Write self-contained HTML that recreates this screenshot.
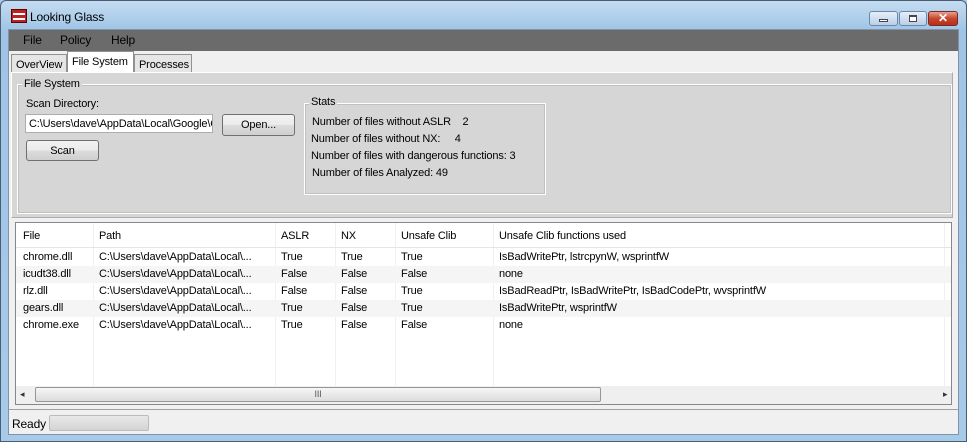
<!DOCTYPE html>
<html><head><style>
*{margin:0;padding:0;box-sizing:border-box}
body{width:967px;height:442px;overflow:hidden;background:#a9cbe8;font-family:"Liberation Sans",sans-serif;font-size:11px;letter-spacing:-0.15px;color:#000;position:relative}
.abs{position:absolute;white-space:nowrap}
#frame{left:0;top:0;width:967px;height:442px;background:linear-gradient(#c4dcf1,#9fc4e6 30px,#a7cae9);border:1px solid #4a5d73;border-radius:6px 6px 0 0}
#client{left:8px;top:29px;width:951px;height:406px;background:#f0f0f0;border:1px solid #7f93ab}
#menu{left:9px;top:30px;width:949px;height:21px;background:#6b6b6b}
#menu span{position:absolute;top:3px;font-size:12px;color:#000}
.tab{position:absolute;height:19px;border:1px solid #919191;background:#e6e6e6;font-size:11px;padding:4px 4px 0;white-space:nowrap}
#panel{left:11px;top:72px;width:942px;height:146px;background:#d6d6d6;border:1px solid #fff;border-right-color:#adadad;border-bottom-color:#adadad}
.grp{position:absolute;border:1px solid #fff;box-shadow:inset 0 0 0 1px #c0c0c0}
.lbl{position:absolute;background:#d6d6d6;padding:0 2px;font-size:11px;white-space:nowrap}
.btn{position:absolute;border:1px solid #707070;border-radius:3px;background:linear-gradient(#f2f2f2,#ebebeb 50%,#dddddd 50%,#cfcfcf);text-align:center;font-size:11px;padding-top:4px}
#list{left:15px;top:222px;width:937px;height:183px;background:#fff;border:1px solid #828790}
.row{position:absolute;left:0;width:935px;height:17px}
.row span,.hdr span{position:absolute;top:2px;white-space:nowrap}
.vl{position:absolute;top:0;width:1px;height:165px;background:#f0f0f0}
</style></head><body>
<div id="frame" class="abs"></div>
<div class="abs" style="left:11px;top:9px;width:16px;height:14px;background:#b22;border:1px solid #600"><div style="margin:3px 1px;height:2px;background:#fff"></div><div style="margin:2px 1px;height:2px;background:#fff"></div></div>
<div class="abs" style="left:30px;top:10px;font-size:12px">Looking Glass</div>
<div class="abs" style="left:869px;top:11px;width:29px;height:15px;border:1px solid #6d87a6;border-radius:3px;background:linear-gradient(#e6eef8,#b9cfe6)"><div style="margin:7px 9px 0;height:3px;background:#fff;border:1px solid #445"></div></div>
<div class="abs" style="left:899px;top:11px;width:28px;height:15px;border:1px solid #6d87a6;border-radius:3px;background:linear-gradient(#e6eef8,#b9cfe6)"><div style="margin:3px 9px 0;height:7px;border:1px solid #445;border-top-width:2px;background:#fff"></div></div>
<div class="abs" style="left:928px;top:11px;width:30px;height:15px;border:1px solid #7a2a20;border-radius:3px;background:linear-gradient(#e8a08f,#c9452f 50%,#b52f18);color:#fff;font-weight:bold;text-align:center;font-size:12px;line-height:13px">✕</div>
<div id="client" class="abs"></div>
<div id="menu" class="abs"><span style="left:14px">File</span><span style="left:51px">Policy</span><span style="left:102px">Help</span></div>
<div class="tab" style="left:11px;top:54px;width:56px">OverView</div>
<div class="tab" style="left:67px;top:51px;width:67px;height:22px;background:#fff;border-bottom:none;padding-top:4px">File System</div>
<div class="tab" style="left:134px;top:54px;width:58px">Processes</div>
<div id="panel" class="abs"></div>
<div class="grp" style="left:17px;top:84px;width:935px;height:130px"></div>
<div class="lbl" style="left:22px;top:78px">File System</div>
<div class="abs" style="left:26px;top:98px">Scan Directory:</div>
<div class="abs" style="left:25px;top:114px;width:188px;height:19px;background:#fff;border:1px solid #abadb3;padding:3px 3px;overflow:hidden;white-space:nowrap">C:\Users\dave\AppData\Local\Google\Chrome</div>
<div class="btn" style="left:222px;top:114px;width:73px;height:22px">Open...</div>
<div class="btn" style="left:26px;top:140px;width:73px;height:21px">Scan</div>
<div class="grp" style="left:304px;top:103px;width:242px;height:92px"></div>
<div class="lbl" style="left:309px;top:96px">Stats</div>
<div class="abs" style="left:312px;top:116px">Number of files without ASLR&nbsp;&nbsp;&nbsp;&nbsp;2</div>
<div class="abs" style="left:311px;top:133px">Number of files without NX:&nbsp;&nbsp;&nbsp;&nbsp;&nbsp;4</div>
<div class="abs" style="left:311px;top:150px">Number of files with dangerous functions: 3</div>
<div class="abs" style="left:312px;top:167px">Number of files Analyzed: 49</div>
<div id="list" class="abs">
<div class="vl" style="left:77px"></div><div class="vl" style="left:259px"></div><div class="vl" style="left:319px"></div><div class="vl" style="left:379px"></div><div class="vl" style="left:477px"></div><div class="vl" style="left:928px"></div>
<div class="row hdr" style="top:5px;height:20px;border-bottom:1px solid #e5e5e5"><span style="left:7px">File</span><span style="left:83px">Path</span><span style="left:265px">ASLR</span><span style="left:325px">NX</span><span style="left:385px">Unsafe Clib</span><span style="left:483px">Unsafe Clib functions used</span></div>
<div class="row" style="top:26px"><span style="left:7px">chrome.dll</span><span style="left:83px">C:\Users\dave\AppData\Local\...</span><span style="left:265px">True</span><span style="left:325px">True</span><span style="left:385px">True</span><span style="left:483px">IsBadWritePtr, lstrcpynW, wsprintfW</span></div>
<div class="row" style="top:43px;background:#f5f5f5"><span style="left:7px">icudt38.dll</span><span style="left:83px">C:\Users\dave\AppData\Local\...</span><span style="left:265px">False</span><span style="left:325px">False</span><span style="left:385px">False</span><span style="left:483px">none</span></div>
<div class="row" style="top:60px"><span style="left:7px">rlz.dll</span><span style="left:83px">C:\Users\dave\AppData\Local\...</span><span style="left:265px">False</span><span style="left:325px">False</span><span style="left:385px">True</span><span style="left:483px">IsBadReadPtr, IsBadWritePtr, IsBadCodePtr, wvsprintfW</span></div>
<div class="row" style="top:77px;background:#f5f5f5"><span style="left:7px">gears.dll</span><span style="left:83px">C:\Users\dave\AppData\Local\...</span><span style="left:265px">True</span><span style="left:325px">False</span><span style="left:385px">True</span><span style="left:483px">IsBadWritePtr, wsprintfW</span></div>
<div class="row" style="top:94px"><span style="left:7px">chrome.exe</span><span style="left:83px">C:\Users\dave\AppData\Local\...</span><span style="left:265px">True</span><span style="left:325px">False</span><span style="left:385px">False</span><span style="left:483px">none</span></div>
<div class="abs" style="left:0;top:163px;width:935px;height:18px;background:#efefef"></div>
<div class="abs" style="left:4px;top:166px;font-size:9px;color:#333">◂</div>
<div class="abs" style="left:927px;top:166px;font-size:9px;color:#333">▸</div>
<div class="abs" style="left:19px;top:164px;width:566px;height:15px;border:1px solid #979797;border-radius:2px;background:linear-gradient(#f6f6f6,#dcdcdc);text-align:center;font-size:9px;line-height:13px;color:#555">III</div>
</div>
<div class="abs" style="left:9px;top:409px;width:949px;height:1px;background:#a0a0a0"></div>
<div class="abs" style="left:12px;top:417px;font-size:12px">Ready</div>
<div class="abs" style="left:49px;top:415px;width:100px;height:16px;border:1px solid #bcbcbc;border-radius:2px;background:linear-gradient(#e8e8e8,#d4d4d4)"></div>
</body></html>
